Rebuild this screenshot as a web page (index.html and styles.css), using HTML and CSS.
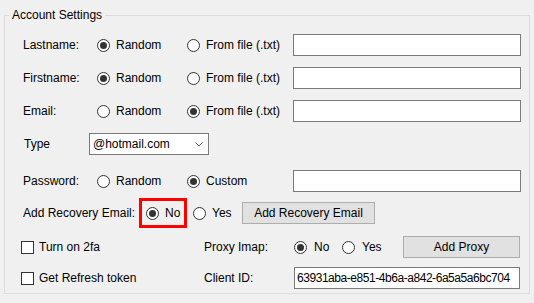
FILE: index.html
```html
<!DOCTYPE html>
<html lang="en">
<head>
    <meta charset="UTF-8">
    <title>Account Settings</title>
    <link rel="stylesheet" href="styles.css">
</head>
<body>
    <fieldset class="group">
        <legend>Account Settings</legend>
        <div class="group-body">
            <div class="row">
                <span class="label">Lastname:</span>
                <span class="opt"><span class="radio checked"></span>Random</span>
                <span class="opt opt-file"><span class="radio"></span>From file (.txt)</span>
                <span class="textbox"></span>
            </div>
            <div class="row">
                <span class="label">Firstname:</span>
                <span class="opt"><span class="radio checked"></span>Random</span>
                <span class="opt opt-file"><span class="radio"></span>From file (.txt)</span>
                <span class="textbox"></span>
            </div>
            <div class="row">
                <span class="label">Email:</span>
                <span class="opt"><span class="radio"></span>Random</span>
                <span class="opt opt-file"><span class="radio checked"></span>From file (.txt)</span>
                <span class="textbox"></span>
            </div>
            <div class="row row-type">
                <span class="label label-type">Type</span>
                <span class="combo">@hotmail.com
                    <svg class="chevron" width="8" height="5" viewBox="0 0 8 5"><path d="M0.5 0.5 L4 4 L7.5 0.5" fill="none" stroke="#606060" stroke-width="1"/></svg>
                </span>
            </div>
            <div class="row row-pass">
                <span class="label">Password:</span>
                <span class="opt"><span class="radio"></span>Random</span>
                <span class="opt opt-file"><span class="radio checked"></span>Custom</span>
                <span class="textbox"></span>
            </div>
            <div class="row row-recovery">
                <span class="label label-recovery">Add Recovery Email:</span>
                <span class="highlight"><span class="radio checked"></span>No</span>
                <span class="opt opt-yes"><span class="radio"></span>Yes</span>
                <button class="btn btn-recovery">Add Recovery Email</button>
            </div>
            <div class="row row-2fa">
                <span class="check-opt"><span class="checkbox"></span>Turn on 2fa</span>
                <span class="label label-proxy">Proxy Imap:</span>
                <span class="opt opt-proxy-no"><span class="radio checked"></span>No</span>
                <span class="opt opt-proxy-yes"><span class="radio"></span>Yes</span>
                <button class="btn btn-proxy">Add Proxy</button>
            </div>
            <div class="row row-client">
                <span class="check-opt"><span class="checkbox"></span>Get Refresh token</span>
                <span class="label label-proxy">Client ID:</span>
                <span class="textbox textbox-client">63931aba-e851-4b6a-a842-6a5a5a6bc704</span>
            </div>
        </div>
    </fieldset>
</body>
</html>
```

FILE: styles.css
```css
body {
    margin: 0;
    background-color: #f0f0f0;
    font-family: "Segoe UI", "Liberation Sans", Arial, sans-serif;
    font-size: 12px;
    color: #000;
}

.group {
    margin: 7px 5px 0 4px;
    padding: 0;
    border: 1px solid #dcdcdc;
}

.group legend {
    margin-left: 4px;
    padding: 0 3px;
    line-height: 16px;
}

.group-body {
    padding: 0 8px 4px 18px;
}

.row {
    display: flex;
    align-items: center;
    height: 22px;
    margin-top: 11px;
}

.row-pass {
    margin-top: 15px;
}

.row-recovery {
    margin-top: 10px;
}

.row-2fa {
    margin-top: 12px;
}

.row-client {
    margin-top: 9px;
}

.label {
    width: 74px;
    flex: none;
}

.label-type {
    width: 65px;
    margin-left: 1px;
}

.label-recovery {
    width: 116px;
}

.label-proxy {
    width: 90px;
}

.opt {
    display: flex;
    align-items: center;
    width: 90px;
    flex: none;
}

.opt-file {
    width: 106px;
}

.radio {
    position: relative;
    width: 13px;
    height: 13px;
    box-sizing: border-box;
    border: 1px solid #333;
    border-radius: 50%;
    background: #fff;
    margin-right: 6px;
    flex: none;
}

.radio.checked::after {
    content: "";
    position: absolute;
    left: 2px;
    top: 2px;
    width: 7px;
    height: 7px;
    border-radius: 50%;
    background: #333;
}

.textbox {
    display: flex;
    align-items: center;
    width: 228px;
    height: 22px;
    box-sizing: border-box;
    border: 1px solid #7a7a7a;
    background: #fff;
    padding: 0 2px;
    flex: none;
}

.textbox-client {
    width: 226px;
    white-space: nowrap;
    overflow: hidden;
    letter-spacing: -0.45px;
}

.combo {
    display: flex;
    align-items: center;
    justify-content: space-between;
    width: 120px;
    height: 22px;
    box-sizing: border-box;
    border: 1px solid #7a7a7a;
    background: #fff;
    padding: 0 5px 0 3px;
}

.highlight {
    display: flex;
    align-items: center;
    width: 48px;
    height: 30px;
    margin: -4px 0;
    box-sizing: border-box;
    border: 3px solid #ff0000;
    padding-left: 4px;
    flex: none;
}

.opt-yes {
    width: 49px;
    margin-left: 6px;
}

.btn {
    height: 22px;
    box-sizing: border-box;
    border: 1px solid #adadad;
    background: #e1e1e1;
    font-family: inherit;
    font-size: 12px;
    color: #000;
    padding: 0;
}

.btn-recovery {
    width: 133px;
}

.btn-proxy {
    width: 117px;
}

.check-opt {
    display: flex;
    align-items: center;
    width: 183px;
    margin-left: -2px;
    flex: none;
}

.checkbox {
    width: 13px;
    height: 13px;
    box-sizing: border-box;
    border: 1px solid #333;
    background: #fff;
    margin-right: 5px;
}

.opt-proxy-no {
    width: 48px;
}

.opt-proxy-no .radio,
.opt-proxy-yes .radio {
    margin-right: 7px;
}

.opt-proxy-yes {
    width: 61px;
}
```
